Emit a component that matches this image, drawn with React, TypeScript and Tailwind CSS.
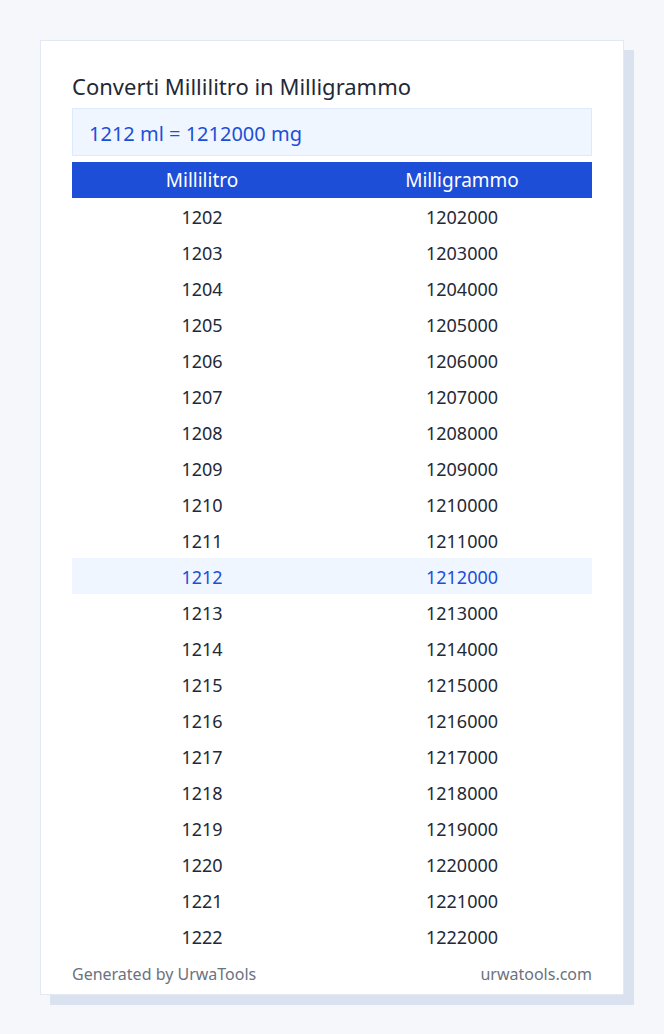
export default function App() {
  const rows = Array.from({ length: 21 }, (_, i) => 1202 + i)
  const current = 1212

  return (
    <main
      className="min-h-screen bg-[#f5f7fb] px-10 pt-10 pb-10"
      style={{ fontFamily: '"Noto Sans", "Open Sans", sans-serif' }}
    >
      <div className="w-[584px] bg-white border border-[#e2e8f4] shadow-[10px_10px_0_#dbe2ef] px-[31px] pt-[31px] pb-[10px]">
        <h1 className="text-[22px] leading-[28px] text-[#1f2937] mb-2">Converti Millilitro in Milligrammo</h1>

        {/* Result */}
        <div className="h-12 flex items-center px-4 pt-[3px] bg-[#eff6ff] border border-[#dbeafe] text-[20px] text-[#1d4ed8]">
          1212 ml = 1212000 mg
        </div>

        {/* Table */}
        <table className="w-full mt-1.5 text-center text-[18px]">
          <thead>
            <tr className="bg-[#1d4ed8] text-white h-9">
              <th className="font-normal w-1/2 text-[19px]">Millilitro</th>
              <th className="font-normal w-1/2 text-[19px]">Milligrammo</th>
            </tr>
          </thead>
          <tbody>
            {rows.map((v) => {
              const hl = v === current
              return (
                <tr key={v} className={hl ? "h-9 bg-[#eff6ff] text-[#1d4ed8]" : "h-9 text-[#1f2937]"}>
                  <td className="pt-[2px]">{v}</td>
                  <td className="pt-[2px]">{v * 1000}</td>
                </tr>
              )
            })}
          </tbody>
        </table>

        {/* Footer */}
        <div className="flex justify-between mt-2.5 text-[16px] leading-5 text-[#6b7280]">
          <span>Generated by UrwaTools</span>
          <span>urwatools.com</span>
        </div>
      </div>
    </main>
  )
}
